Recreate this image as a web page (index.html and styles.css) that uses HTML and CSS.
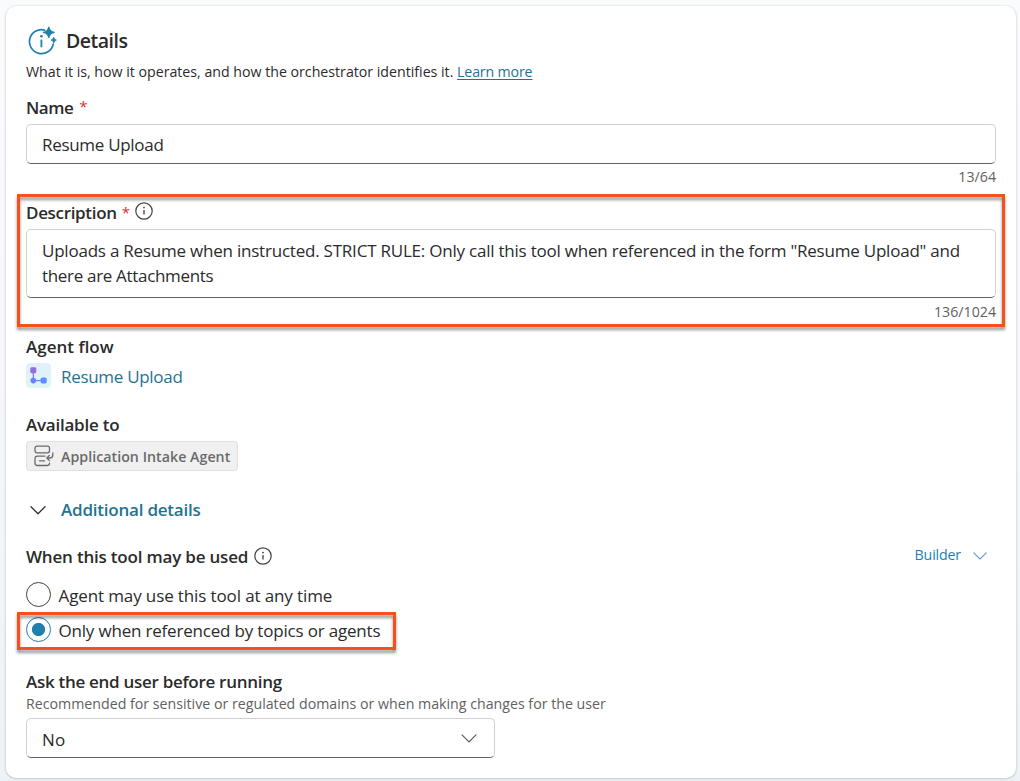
FILE: index.html
```html
<!DOCTYPE html>
<html lang="en">
<head>
<meta charset="utf-8">
<title>Details</title>
<link rel="stylesheet" href="styles.css">
</head>
<body>
<main class="card">
  <header class="header">
    <svg class="header-icon" viewBox="0 0 30 30" fill="none">
      <path d="M16.6 4.1A12 12 0 1 0 25.2 18.2" stroke="#217fae" stroke-width="1.7" stroke-linecap="round"/>
      <path d="M13.4 13.6v7.7" stroke="#217fae" stroke-width="1.8"/>
      <circle cx="13.4" cy="10.2" r="1.3" fill="#217fae"/>
      <path d="M20.8 1Q21.7 5.4 26.2 6.3Q21.7 7.2 20.8 11.6Q19.9 7.2 15.4 6.3Q19.9 5.4 20.8 1Z" fill="#217fae" stroke="#217fae" stroke-width="1.2" stroke-linejoin="round"/>
      <path d="M25.8 11.2Q26.2 13.6 28.4 14.1Q26.2 14.6 25.8 17Q25.4 14.6 23 14.1Q25.4 13.6 25.8 11.2Z" fill="#217fae" stroke="#217fae" stroke-width=".8" stroke-linejoin="round"/>
    </svg>
    <h1 class="title">Details</h1>
  </header>
  <p class="intro"><span class="intro-text">What it is, how it operates, and how the orchestrator identifies it.</span> <a class="learn">Learn more</a></p>

  <section class="name-field">
    <div class="label-row"><span class="label label-name">Name</span><span class="star">*</span></div>
    <div class="input"><span class="value-name">Resume Upload</span></div>
    <div class="counter">13/64</div>
  </section>

  <section class="description-field">
    <div class="label-row"><span class="label label-description">Description</span><span class="star">*</span>
      <svg class="info" viewBox="0 0 18 18" fill="none"><circle cx="9" cy="9" r="8.2" stroke="#424242" stroke-width="1.2"/><path d="M9 8v4.6" stroke="#424242" stroke-width="1.3"/><circle cx="9" cy="5.6" r=".9" fill="#424242"/></svg>
    </div>
    <div class="input textarea"><span class="line-one">Uploads a Resume when instructed. STRICT RULE: Only call this tool when referenced in the form "Resume Upload" and</span><span class="line-two">there are Attachments</span></div>
    <div class="counter counter-long">136/1024</div>
    <div class="highlight highlight-description"></div>
  </section>

  <section class="flow">
    <div class="label label-flow">Agent flow</div>
    <div class="flow-row">
      <svg class="flow-icon" viewBox="0 0 25 25">
        <defs>
          <linearGradient id="tile" x1="0" y1="0" x2="0" y2="1"><stop stop-color="#e2effc"/><stop offset="1" stop-color="#dff6f3"/></linearGradient>
          <linearGradient id="stem" x1="0" y1="0" x2="0" y2="1"><stop stop-color="#9470e0"/><stop offset="1" stop-color="#6589f2"/></linearGradient>
        </defs>
        <rect width="25" height="25" rx="4" fill="url(#tile)"/>
        <rect x="6.7" y="8" width="1.3" height="9.5" fill="url(#stem)"/>
        <path d="M8 17.6h8" stroke="#668df5" stroke-width="1.3"/>
        <rect x="4.3" y="4.2" width="6" height="6" rx="1.4" fill="#986be0"/>
        <circle cx="7.3" cy="17.6" r="2.8" fill="#6b82f1"/>
        <rect x="14.7" y="14.6" width="6" height="6" rx="1.6" fill="#5b91fc"/>
      </svg>
      <a class="flow-link">Resume Upload</a>
    </div>
  </section>

  <section class="available">
    <div class="label label-available">Available to</div>
    <div class="chip">
      <svg class="chip-icon" viewBox="0 0 20 22" fill="none" stroke="#6b6b6b" stroke-width="1.3" stroke-linecap="round" stroke-linejoin="round">
        <rect x="1" y="1.2" width="14.5" height="6.6" rx="2"/>
        <path d="M11 11.2H3.5Q1 11.2 1 13.7V18Q1 20.5 3.5 20.5H13Q15.5 20.5 15.5 18.2M5.5 15.8h5.2M18.8 8V10Q18.8 13 15.8 13H12.8M15.4 10.4L12.8 13L15.4 15.6"/>
      </svg>
      <span class="chip-text">Application Intake Agent</span>
    </div>
  </section>

  <div class="additional">
    <svg class="chevron" viewBox="0 0 16 9" fill="none" stroke="#303030" stroke-width="1.3" stroke-linecap="round" stroke-linejoin="round"><path d="M1 .8L8 7.8L15 .8"/></svg>
    <span class="additional-text">Additional details</span>
  </div>

  <section class="usage">
    <div class="usage-head">
      <span class="label label-usage">When this tool may be used</span>
      <svg class="info" viewBox="0 0 18 18" fill="none"><circle cx="9" cy="9" r="8.2" stroke="#424242" stroke-width="1.2"/><path d="M9 8v4.6" stroke="#424242" stroke-width="1.3"/><circle cx="9" cy="5.6" r=".9" fill="#424242"/></svg>
      <span class="builder"><span class="builder-text">Builder</span>
        <svg class="builder-chevron" viewBox="0 0 14 8" fill="none" stroke="#5fa3c8" stroke-width="1.1" stroke-linecap="round" stroke-linejoin="round"><path d="M.8 .8L7 7L13.2 .8"/></svg>
      </span>
    </div>
    <div class="option"><span class="radio"></span><span class="option-any">Agent may use this tool at any time</span></div>
    <div class="option"><span class="radio radio-on"></span><span class="option-only">Only when referenced by topics or agents</span>
      <div class="highlight highlight-option"></div>
    </div>
  </section>

  <section class="ask">
    <div class="label label-ask">Ask the end user before running</div>
    <div class="hint">Recommended for sensitive or regulated domains or when making changes for the user</div>
    <div class="input select"><span class="value-no">No</span>
      <svg class="chevron" viewBox="0 0 16 9" fill="none" stroke="#5a5a5a" stroke-width="1.2" stroke-linecap="round" stroke-linejoin="round"><path d="M1 .8L8 7.8L15 .8"/></svg>
    </div>
  </section>
</main>
</body>
</html>
```
FILE: styles.css
```css
* { box-sizing: border-box; }
body {
  margin: 0;
  height: 781px;
  overflow: hidden;
  padding: 6px 4px 3px 6px;
  background: linear-gradient(180deg, #fafbfd 0%, #f5f7fb 50%, #ecf2f6 100%);
  font-family: "Open Sans", "Noto Sans", sans-serif;
  font-size: 17px;
  color: #2b2b2b;
  white-space: nowrap;
}
.card {
  height: 772px;
  padding: 19px 20px 0;
  background: #fff;
  border-radius: 10px;
  box-shadow: 0 0 2px rgba(0,0,0,.14), 0 1px 3px rgba(0,0,0,.14);
}
.header { display: flex; align-items: center; height: 32px; }
.header-icon { width: 30px; height: 30px; margin: -1px 8.5px 0 1.5px; }
.title { margin: 0; font-size: 19.5px; font-weight: 600; line-height: 32px; letter-spacing: -.5px; }
.intro { margin: 4px 0 0; font-size: 14.2px; line-height: 22px; }
.intro-text { letter-spacing: -.01px; }
.learn { color: #1f7391; text-decoration: underline; text-underline-offset: 2px; letter-spacing: -.15px; }
.label { font-weight: 600; line-height: 24px; letter-spacing: -.24px; }
.label-name { line-height: 25px; letter-spacing: -.5px; }
.label-description { letter-spacing: -.33px; }
.label-flow { letter-spacing: 0; }
.label-usage { letter-spacing: -.2px; }
.label-ask { letter-spacing: -.29px; }
.label-row { display: flex; height: 24px; }
.star { margin-left: 5px; color: #d13438; font-size: 15px; line-height: 23px; }
.name-field { margin-top: 12px; }
.name-field .star { margin-left: 6px; }
.input {
  display: flex;
  align-items: center;
  height: 40px;
  margin-top: 5px;
  padding: 1px 15px 0;
  border: 1px solid #d1d1d1;
  border-bottom-color: #616161;
  border-radius: 5px;
}
.value-name, .flow-link { letter-spacing: -.3px; }
.counter { height: 20px; margin-top: 3px; color: #616161; font-size: 14.2px; line-height: 20px; text-align: right; }
.description-field { position: relative; margin-top: 14px; }
.info { width: 18px; height: 18px; margin: 1px 0 0 5px; }
.textarea { height: 69px; flex-direction: column; align-items: flex-start; justify-content: center; line-height: 25px; padding-top: 0; padding-bottom: 2px; }
.line-one { letter-spacing: -.22px; }
.line-two { letter-spacing: -.32px; }
.description-field .input { margin-top: 4px; }
.description-field .counter { margin-top: 4px; }
.highlight { position: absolute; border: 3px solid #f4511e; filter: drop-shadow(0 3px 1.5px rgba(0,0,0,.42)); pointer-events: none; }
.highlight-description { left: -9px; right: -9px; top: -7px; height: 133px; }
.flow { margin-top: 13px; }
.flow-row { display: flex; height: 25px; margin-top: 4px; align-items: center; }
.flow-icon { width: 25px; height: 25px; margin-right: 10px; }
.flow-link { color: #1f7391; line-height: 25px; padding-top: 2px; }
.available { margin-top: 25px; }
.chip { display: flex; align-items: center; width: 212px; height: 30px; margin-top: 4px; padding-left: 7px; background: #f0f0f0; border: 1px solid #e0e0e0; border-radius: 4px; }
.chip-icon { width: 20px; height: 22px; margin-right: 7px; }
.chip-text { color: #6a6a6a; font-size: 14.2px; font-weight: 600; letter-spacing: .04px; }
.additional { display: flex; align-items: center; height: 24px; margin-top: 27px; padding-left: 4px; }
.chevron { width: 16px; height: 9px; }
.additional-text { margin-left: 15px; color: #1f7391; font-weight: 600; line-height: 24px; letter-spacing: -.22px; }
.usage { margin-top: 23px; }
.usage-head { display: flex; height: 24px; }
.usage-head .info { margin: 2px 0 0 6px; }
.builder { display: flex; align-items: center; height: 18px; margin: 0 9px 0 auto; color: #217fae; font-size: 14.2px; }
.builder-text { letter-spacing: -.15px; }
.builder-chevron { width: 14px; height: 8px; margin: 4px 0 0 12px; }
.option { position: relative; display: flex; align-items: center; height: 25px; margin-top: 13px; line-height: 25px; padding-top: 1px; }
.option + .option { margin-top: 10px; }
.option-any { letter-spacing: -.12px; }
.option-only { letter-spacing: -.19px; }
.radio { width: 25px; height: 25px; margin: -1px 7.5px 0 0; border: 1px solid #424242; border-radius: 50%; }
.radio-on { border-color: #217fae; background: radial-gradient(circle, #217fae 6.2px, transparent 7px); }
.highlight-option { left: -9px; top: -5px; width: 379px; height: 38px; }
.ask { margin-top: 28px; }
.hint { color: #616161; font-size: 14.2px; line-height: 20px; }
.select { width: 469px; justify-content: space-between; margin-top: 4px; padding-right: 17px; }
.value-no { padding-top: 2px; letter-spacing: .2px; }
```
